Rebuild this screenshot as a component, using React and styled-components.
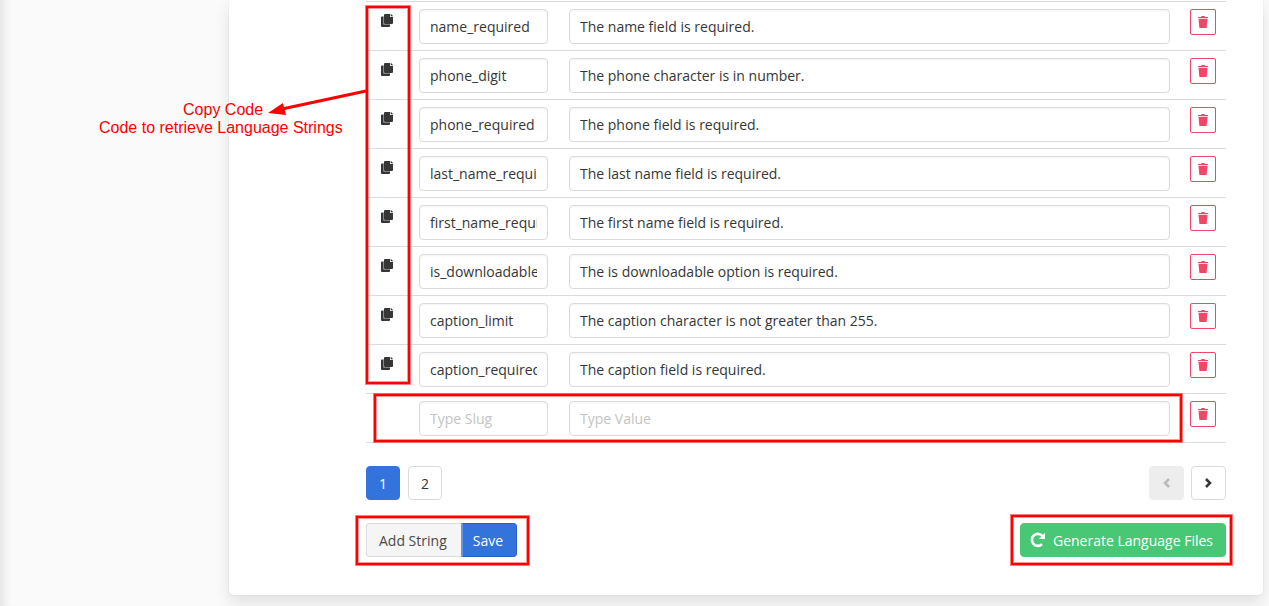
import React, { useState } from "react";
import styled, { createGlobalStyle, css } from "styled-components";

const GlobalStyle = createGlobalStyle`
  *, *::before, *::after { box-sizing: border-box; }
  html { background: #fafafa; }
  body {
    margin: 0;
    color: #363636;
    font-family: "Open Sans", "Noto Sans", sans-serif;
    font-size: 14px;
    line-height: 21px;
  }
  button, input { font: inherit; }
`;

const Page = styled.div`
  display: flex;
  min-height: 100vh;
  padding: 0 6px 11px 0;
  overflow: hidden;
  background: #fafafa;
  box-shadow: inset 12px 0 12px -10px rgba(10, 10, 10, 0.12);
`;

const Sidebar = styled.aside`
  flex: 0 0 229px;
`;

const Card = styled.main`
  flex: 1;
  min-width: 0;
  padding: 1px 37px 38px 137px;
  background: #fff;
  border-radius: 0 0 5px 5px;
  box-shadow: 0 8px 16px rgba(10, 10, 10, 0.1), 0 0 0 1px rgba(10, 10, 10, 0.02);
`;

const TableArea = styled.section`
  position: relative;
`;

const Table = styled.table`
  width: 100%;
  table-layout: fixed;
  border-spacing: 0;
  border-top: 1px solid #dbdbdb;
`;

const Column = styled.col`
  width: ${(p) => p.$width || "auto"};
`;

const Cell = styled.td`
  height: 49px;
  padding: 7px 10px 6px;
  vertical-align: top;
  border-bottom: 1px solid #dbdbdb;
`;

const SlugCell = styled(Cell)`
  padding-right: 11px;
`;

const TextInput = styled.input`
  display: block;
  width: 100%;
  height: 35px;
  padding: 0 10px;
  color: #363636;
  background: #fff;
  border: 1px solid #dbdbdb;
  border-radius: 4px;
  box-shadow: inset 0 1px 2px rgba(10, 10, 10, 0.05);
  &::placeholder { color: #c3c3c3; opacity: 1; }
`;

const CopyButton = styled.button`
  display: flex;
  align-items: center;
  justify-content: center;
  width: 22px;
  height: 23px;
  padding: 0;
  color: #363636;
  background: none;
  border: 0;
  cursor: pointer;
`;

const DeleteButton = styled.button`
  display: flex;
  align-items: center;
  justify-content: center;
  width: 26px;
  height: 26px;
  padding: 0;
  color: #f14668;
  background: #fff;
  border: 1px solid currentColor;
  border-radius: 2px;
  cursor: pointer;
`;

const Bar = styled.div`
  display: flex;
  align-items: center;
  justify-content: space-between;
  margin-top: 23px;
`;

const Group = styled.div`
  position: relative;
  display: flex;
  gap: ${(p) => p.$gap || 0}px;
`;

const tones = {
  plain: css`color: #363636; background: #fff; border-color: #dbdbdb;`,
  current: css`color: #fff; background: #3273dc; border-color: #3273dc;`,
  disabled: css`color: #b9b9b9; background: #ededed; border-color: #ededed;`,
  light: css`color: #4a4a4a; background: #f5f5f5; border-color: #dbdbdb;`,
  primary: css`color: #fff; background: #3273dc; border-color: #2560c4;`,
  success: css`color: #fff; background: #48c774; border-color: #48c774;`,
};

const Button = styled.button`
  display: flex;
  align-items: center;
  justify-content: center;
  gap: 6px;
  min-width: 34px;
  height: 34px;
  padding: 0;
  border: 1px solid;
  border-radius: 4px;
  white-space: nowrap;
  cursor: pointer;
  ${(p) => tones[p.$tone]}
`;

const ArrowButton = styled(Button)`
  width: 35px;
`;

const AddButton = styled(Button)`
  padding: 0 14px 0 12px;
  border-right: 0;
  border-radius: 4px 0 0 4px;
`;

const SaveButton = styled(Button)`
  padding: 0 13px 0 10px;
  border-left: 2px solid #6394e6;
  border-radius: 0 4px 4px 0;
`;

const GenerateButton = styled(Button)`
  padding: 0 12px 0 9px;
  gap: 7px;
`;

const Frame = styled.span`
  position: absolute;
  inset: ${(p) => p.$inset};
  border: 2px solid #fe0000;
  box-shadow: 0 0 0 1px rgba(254, 0, 0, 0.5), inset 0 0 0 1px rgba(254, 0, 0, 0.4);
  pointer-events: none;
`;

const CopyFrame = styled(Frame)`
  width: 44px;
`;

const Callout = styled.p`
  position: absolute;
  top: 100px;
  left: -267px;
  margin: 0;
  color: #fe0000;
  font-family: "Liberation Sans", Arial, sans-serif;
  font-size: 16px;
  line-height: 18px;
  text-align: center;
  white-space: nowrap;
`;

const Arrow = styled.svg`
  position: absolute;
  top: 84px;
  left: -100px;
  pointer-events: none;
`;

const CopyIcon = () => (
  <svg width="12" height="13" viewBox="0 0 12 13" fill="currentColor" aria-hidden="true">
    <path d="M1 2.500H2.400V10.600H9V12Q9 13 8 13H1Q0 13 0 12V3.500Q0 2.500 1 2.500z" />
    <path d="M3 1Q3 0 4 0H9V3H12V9Q12 10 11 10H4Q3 10 3 9z" />
    <path d="M9.700 0H10L12 2V2.300H9.700z" />
    <path d="M2.400 2.500H3V10H9V10.600H2.400z" opacity="0.500" />
  </svg>
);

const TrashIcon = () => (
  <svg width="10" height="12" viewBox="0 0 10 12" fill="currentColor" aria-hidden="true">
    <path d="M0 1H3L3.500 0h3L7 1h3v1H0z" />
    <path d="M.500 3h9L8.600 12H1.400z" />
    <path d="M.500 2h9v1h-9z" opacity="0.250" />
  </svg>
);

const Chevron = ({ back }) => (
  <svg width="8" height="10" viewBox="0 0 8 10" fill="none" stroke="currentColor" strokeWidth="2.500" aria-hidden="true">
    <path d={back ? "M6 1L2 5l4 4" : "M1 1l4 4-4 4"} />
  </svg>
);

const RedoIcon = () => (
  <svg width="16" height="16" viewBox="0 0 16 16" aria-hidden="true">
    <path d="M12 12.300A6 6 0 1 1 12.600 4.200" fill="none" stroke="currentColor" strokeWidth="2.600" />
    <path d="M15 .800V7H8.800z" fill="currentColor" />
  </svg>
);

const strings = [
  ["name_required", "The name field is required."],
  ["phone_digit", "The phone character is in number."],
  ["phone_required", "The phone field is required."],
  ["last_name_required", "The last name field is required."],
  ["first_name_required", "The first name field is required."],
  ["is_downloadable_required", "The is downloadable option is required."],
  ["caption_limit", "The caption character is not greater than 255."],
  ["caption_required", "The caption field is required."],
  ["", ""],
];

function StringRow({ slug, value }) {
  const [name, setName] = useState(slug);
  const [text, setText] = useState(value);
  return (
    <tr>
      <Cell>
        {slug && (
          <CopyButton type="button" aria-label={`Copy ${slug}`}>
            <CopyIcon />
          </CopyButton>
        )}
      </Cell>
      <SlugCell>
        <TextInput aria-label="Slug" placeholder="Type Slug" value={name} onChange={(e) => setName(e.target.value)} />
      </SlugCell>
      <Cell>
        <TextInput aria-label="Value" placeholder="Type Value" value={text} onChange={(e) => setText(e.target.value)} />
      </Cell>
      <Cell>
        <DeleteButton type="button" aria-label="Delete string">
          <TrashIcon />
        </DeleteButton>
      </Cell>
    </tr>
  );
}

export default function App() {
  return (
    <>
      <GlobalStyle />
      <Page>
        <Sidebar />
        <Card>
          <TableArea>
            <Table>
              <colgroup>
                <Column $width="43px" />
                <Column $width="150px" />
                <Column />
                <Column $width="46px" />
              </colgroup>
              <tbody>
                {strings.map(([slug, value]) => (
                  <StringRow key={slug} slug={slug} value={value} />
                ))}
              </tbody>
            </Table>
            <CopyFrame $inset="5px auto 59px 0" />
            <Frame $inset="393px 44px 1px 8px" />
            <Arrow width="102" height="34" viewBox="0 0 102 34" aria-hidden="true">
              <path d="M100 6L16 24" stroke="#fe0000" strokeWidth="3" />
              <path d="M2 28L17 18l3 12z" fill="#fe0000" />
            </Arrow>
            <Callout>
              &nbsp;Copy Code
              <br />
              Code to retrieve Language Strings
            </Callout>
          </TableArea>
          <Bar as="nav" aria-label="Pagination">
            <Group $gap={8}>
              <Button type="button" $tone="current">1</Button>
              <Button type="button" $tone="plain">2</Button>
            </Group>
            <Group $gap={7}>
              <ArrowButton type="button" $tone="disabled" disabled aria-label="Previous page">
                <Chevron back />
              </ArrowButton>
              <ArrowButton type="button" $tone="plain" aria-label="Next page">
                <Chevron />
              </ArrowButton>
            </Group>
          </Bar>
          <Bar>
            <Group>
              <AddButton type="button" $tone="light">Add String</AddButton>
              <SaveButton type="button" $tone="primary">Save</SaveButton>
              <Frame $inset="-7px -12px -8px -10px" />
            </Group>
            <Group>
              <GenerateButton type="button" $tone="success">
                <RedoIcon />
                Generate Language Files
              </GenerateButton>
              <Frame $inset="-8px -6px -8px -9px" />
            </Group>
          </Bar>
        </Card>
      </Page>
    </>
  );
}
